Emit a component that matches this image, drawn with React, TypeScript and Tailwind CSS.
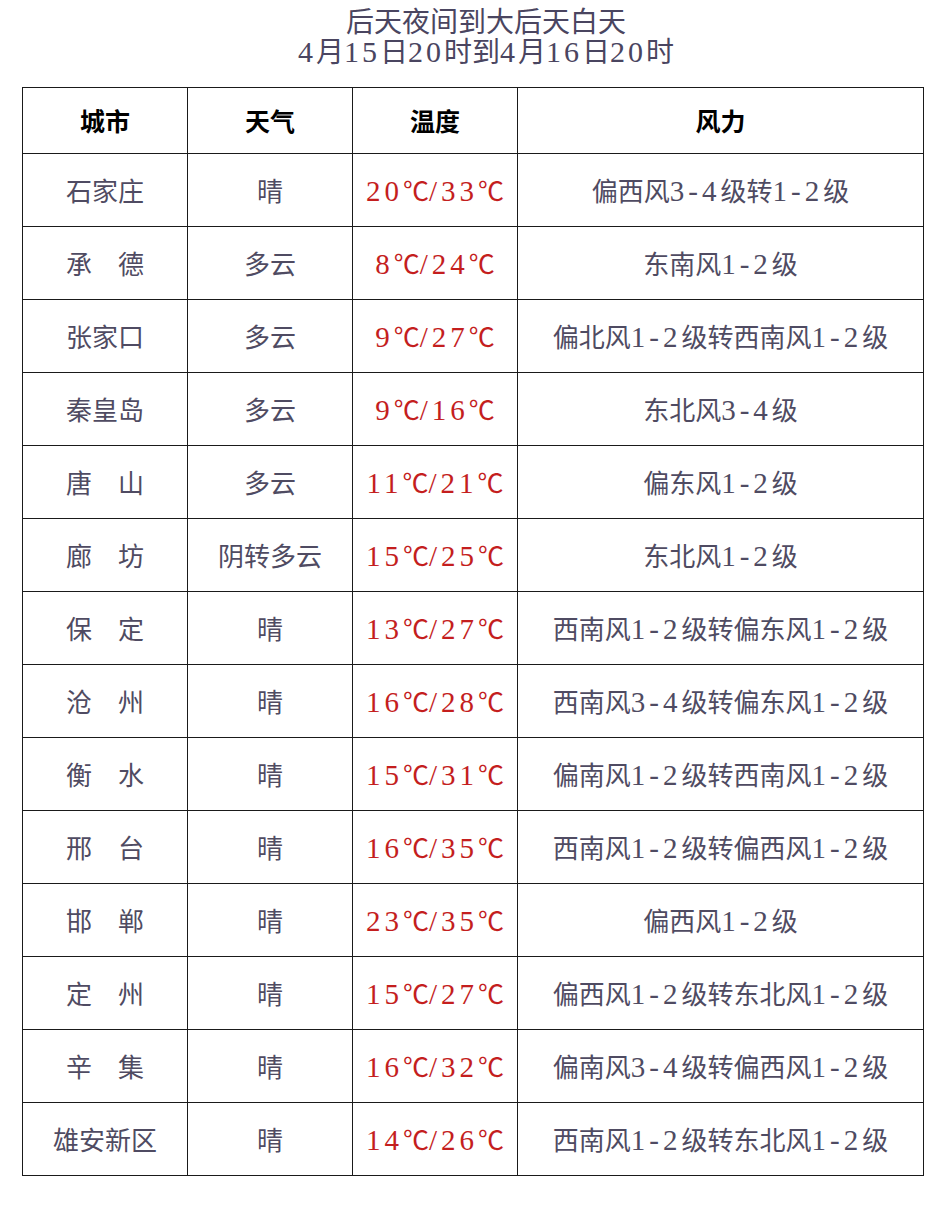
const rows: [string, string, string, string][] = [
  ["石家庄", "晴", "20℃/33℃", "偏西风3-4级转1-2级"],
  ["承　德", "多云", "8℃/24℃", "东南风1-2级"],
  ["张家口", "多云", "9℃/27℃", "偏北风1-2级转西南风1-2级"],
  ["秦皇岛", "多云", "9℃/16℃", "东北风3-4级"],
  ["唐　山", "多云", "11℃/21℃", "偏东风1-2级"],
  ["廊　坊", "阴转多云", "15℃/25℃", "东北风1-2级"],
  ["保　定", "晴", "13℃/27℃", "西南风1-2级转偏东风1-2级"],
  ["沧　州", "晴", "16℃/28℃", "西南风3-4级转偏东风1-2级"],
  ["衡　水", "晴", "15℃/31℃", "偏南风1-2级转西南风1-2级"],
  ["邢　台", "晴", "16℃/35℃", "西南风1-2级转偏西风1-2级"],
  ["邯　郸", "晴", "23℃/35℃", "偏西风1-2级"],
  ["定　州", "晴", "15℃/27℃", "偏西风1-2级转东北风1-2级"],
  ["辛　集", "晴", "16℃/32℃", "偏南风3-4级转偏西风1-2级"],
  ["雄安新区", "晴", "14℃/26℃", "西南风1-2级转东北风1-2级"],
]

// digits in the picture are wider than the CJK font's, so give ascii runs their own span
function Mixed({ text, big }: { text: string; big?: boolean }) {
  const parts = text.match(/[0-9\-\/]+|[^0-9\-\/]+/g) || []
  return (
    <>
      {parts.map((p, i) =>
        /^[0-9\-\/]+$/.test(p) ? (
          <span
            key={i}
            className={
              big
                ? "text-[30px] leading-[20px] tracking-[3px]"
                : "text-[29px] leading-[20px] tracking-[4px]"
            }
            style={{ fontFamily: '"Liberation Serif", serif' }}
          >
            {p}
          </span>
        ) : (
          <span key={i}>{p}</span>
        )
      )}
    </>
  )
}

export default function App() {
  return (
    <div
      className="w-[942px] h-[1218px] bg-white"
      style={{ fontFamily: '"Noto Sans CJK SC", "Liberation Serif", serif' }}
    >
      {/* title */}
      <div className="pt-[5px] pl-[30px] text-center text-[28px] leading-[30px] text-[#4a4560]">
        <div>后天夜间到大后天白天</div>
        <div>
          <Mixed text="4月15日20时到4月16日20时" big />
        </div>
      </div>

      <table className="mt-[22px] ml-[22px] w-[901px] border-collapse table-fixed text-center">
        <colgroup>
          <col className="w-[165px]" />
          <col className="w-[165px]" />
          <col className="w-[165px]" />
          <col className="w-[406px]" />
        </colgroup>
        <thead>
          <tr className="h-[66px] text-[25px] font-bold text-black">
            <th className="border border-[#1a1a1a]">城市</th>
            <th className="border border-[#1a1a1a]">天气</th>
            <th className="border border-[#1a1a1a]">温度</th>
            <th className="border border-[#1a1a1a]">风力</th>
          </tr>
        </thead>
        <tbody>
          {rows.map(([city, weather, temp, wind]) => (
            <tr key={city} className="h-[73px] text-[26px] leading-[34px] text-[#4f4b62]">
              <td className="border border-[#1a1a1a] whitespace-nowrap">{city}</td>
              <td className="border border-[#1a1a1a] whitespace-nowrap">{weather}</td>
              <td className="border border-[#1a1a1a] whitespace-nowrap text-[#c41e1e]">
                <Mixed text={temp} />
              </td>
              <td className="border border-[#1a1a1a] whitespace-nowrap">
                <Mixed text={wind} />
              </td>
            </tr>
          ))}
        </tbody>
      </table>
    </div>
  )
}
